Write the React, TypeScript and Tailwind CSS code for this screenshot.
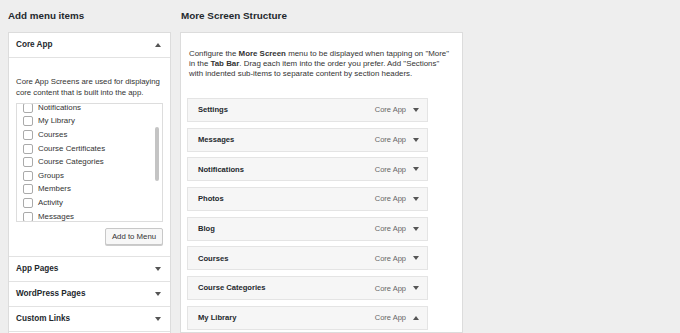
import React from 'react';

const FONT = { fontFamily: '"Liberation Sans", Arial, sans-serif' };

// 小さな三角（開閉インジケータ）
function Caret({ up = false }: { up?: boolean }) {
  return (
    <svg width="6" height="4" viewBox="0 0 6 4" className="shrink-0">
      {up ? <polygon points="0,4 6,4 3,0" fill="#555" /> : <polygon points="0,0 6,0 3,4" fill="#555" />}
    </svg>
  );
}

const CORE_SCREENS = [
  'Notifications',
  'My Library',
  'Courses',
  'Course Certificates',
  'Course Categories',
  'Groups',
  'Members',
  'Activity',
  'Messages',
];

const STRUCTURE = [
  'Settings',
  'Messages',
  'Notifications',
  'Photos',
  'Blog',
  'Courses',
  'Course Categories',
  'My Library',
];

const OTHER_SECTIONS = ['App Pages', 'WordPress Pages', 'Custom Links'];

export default function App() {
  return (
    <div className="w-[680px] h-[333px] overflow-hidden bg-[#eeeeee] flex items-start pl-[8px] text-[#23282d]" style={FONT}>
      {/* 左: メニュー項目追加 */}
      <div className="w-[163px] shrink-0 flex flex-col">
        <h2 className="h-[32px] shrink-0 flex items-center text-[9.8px] font-bold text-[#23282d]">Add menu items</h2>
        <div className="shrink-0 border border-[#dcdcdc] bg-white">
          <div className="h-[25px] flex items-center justify-between pl-[7px] pr-[9px] border-b border-[#e2e2e2]">
            <span className="text-[8.2px] font-bold">Core App</span>
            <Caret up />
          </div>
          <div className="h-[198px] px-[7px] pt-[18px]">
            <p className="text-[7.8px] leading-[11px] text-[#333]">
              Core App Screens are used for displaying core content that is built into the app.
            </p>
            <div className="relative mt-[5px] h-[119px] border border-[#dddddd] overflow-hidden">
              <div className="-mt-[3px] pl-[6px] flex flex-col">
                {CORE_SCREENS.map((s) => (
                  <label key={s} className="h-[13.6px] shrink-0 flex items-center gap-[5px] text-[7.9px] text-[#333]">
                    <span className="w-[10px] h-[10px] border border-[#aaaaaa] rounded-[2px] bg-white shrink-0" />
                    {s}
                  </label>
                ))}
              </div>
              <div className="absolute right-[3px] top-[23px] w-[4px] h-[54px] rounded-full bg-[#c4c4c4]" />
            </div>
            <div className="flex justify-end mt-[6px]">
              <button className="h-[17px] w-[58px] border border-[#c8c8c8] bg-[#f7f7f7] rounded-[2px] text-[7.8px] text-[#333] shadow-[0_1px_0_#ccc]">
                Add to Menu
              </button>
            </div>
          </div>
          {OTHER_SECTIONS.map((s) => (
            <div key={s} className="h-[25px] flex items-center justify-between pl-[7px] pr-[9px] border-t border-[#e2e2e2]">
              <span className="text-[8.2px] font-bold">{s}</span>
              <Caret />
            </div>
          ))}
          <div className="h-[25px] border-t border-[#e2e2e2]" />
        </div>
      </div>

      {/* 右: More Screen 構成 */}
      <div className="ml-[9px] w-[283px] h-[333px] shrink-0 flex flex-col">
        <h2 className="h-[32px] shrink-0 flex items-center pl-[1px] text-[9.9px] font-bold">More Screen Structure</h2>
        <div className="flex-1 border border-[#dcdcdc] bg-white pl-[8px] pt-[16px]">
          <p className="whitespace-nowrap text-[7.9px] leading-[10px] text-[#333]">
            Configure the <b>More Screen</b> menu to be displayed when tapping on "More"
            <br />
            in the <b>Tab Bar</b>. Drag each item into the order you prefer. Add "Sections"
            <br />
            with indented sub-items to separate content by section headers.
          </p>
          <div className="mt-[19px] -ml-[2px] w-[241px] flex flex-col gap-[5.7px]">
            {STRUCTURE.map((s, i) => (
              <div key={s} className="h-[24px] shrink-0 flex items-center bg-[#f6f6f6] border border-[#e4e4e4] pl-[10px] pr-[8px]">
                <span className="flex-1 text-[7.6px] font-bold text-[#23282d]">{s}</span>
                <span className="text-[7.5px] text-[#666] mr-[7px]">Core App</span>
                <Caret up={i === STRUCTURE.length - 1} />
              </div>
            ))}
          </div>
        </div>
      </div>
    </div>
  );
}
